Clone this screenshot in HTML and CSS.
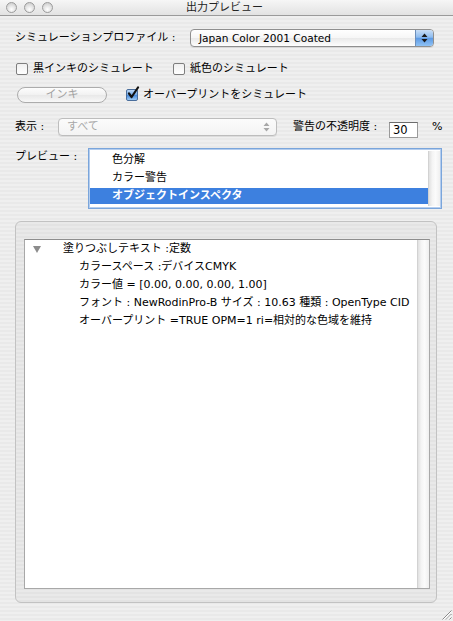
FILE: index.html
```html
<!DOCTYPE html>
<html lang="ja">
<head>
<meta charset="utf-8">
<title>出力プレビュー</title>
<link rel="stylesheet" href="styles.css">
</head>
<body>
<div class="window">
  <div class="titlebar">
    <div class="lights"><span class="light"></span><span class="light"></span><span class="light"></span></div>
    <div class="title">出力プレビュー</div>
    <div></div>
  </div>
  <div class="content">
    <div class="row r1">
      <span class="label l-profile">シミュレーションプロファイル :</span>
      <div class="popup profile">
        <span class="popup-text">Japan Color 2001 Coated</span>
        <span class="arrows blue">
          <svg width="7" height="10" viewBox="0 0 7 10"><path d="M3.5 0.5 L6.5 4 L0.5 4 Z M3.5 9.5 L6.5 6 L0.5 6 Z" fill="#1a1a1a"/></svg>
        </span>
      </div>
    </div>
    <div class="row r2">
      <span class="check c1"><span class="box"></span><span>黒インキのシミュレート</span></span>
      <span class="check c2"><span class="box"></span><span>紙色のシミュレート</span></span>
    </div>
    <div class="row r3">
      <span class="btn">インキ</span>
      <span class="check c3">
        <span class="box checked">
          <svg width="14" height="15" viewBox="0 0 14 15"><path d="M3 7.5 L5.6 11 L12 1.5" fill="none" stroke="#111" stroke-width="2.2" stroke-linecap="round" stroke-linejoin="round"/></svg>
        </span>
        <span>オーバープリントをシミュレート</span>
      </span>
    </div>
    <div class="row r4">
      <span class="label l-view">表示 :</span>
      <div class="popup disabled">
        <span class="popup-text">すべて</span>
        <span class="arrows gray">
          <svg width="7" height="10" viewBox="0 0 7 10"><path d="M3.5 0.5 L6.5 4 L0.5 4 Z M3.5 9.5 L6.5 6 L0.5 6 Z" fill="#a8a8a8"/></svg>
        </span>
      </div>
      <span class="label l-opacity">警告の不透明度 :</span>
      <span class="field">30</span>
      <span class="pct">%</span>
    </div>
    <div class="row r5">
      <span class="label l-preview">プレビュー :</span>
      <div class="listbox">
        <div class="list-items">
          <div class="item">色分解</div>
          <div class="item">カラー警告</div>
          <div class="item selected">オブジェクトインスペクタ</div>
        </div>
        <div class="scrolltrack"></div>
      </div>
    </div>
    <div class="group">
      <div class="tree">
        <div class="tree-items">
          <div class="node parent"><span class="disclosure"></span><span>塗りつぶしテキスト :定数</span></div>
          <div class="node child">カラースペース :デバイスCMYK</div>
          <div class="node child">カラー値 = [0.00, 0.00, 0.00, 1.00]</div>
          <div class="node child">フォント : NewRodinPro-B サイズ : 10.63 種類 : OpenType CID</div>
          <div class="node child">オーバープリント =TRUE OPM=1 ri=相対的な色域を維持</div>
        </div>
        <div class="scrolltrack"></div>
      </div>
    </div>
  </div>
  <svg class="grip" width="11" height="11" viewBox="0 0 11 11">
    <path d="M10.5 1.5 L1.5 10.5 M10.5 5 L5 10.5 M10.5 8.5 L8.5 10.5" stroke="#8a8a8a" stroke-width="1"/>
    <path d="M10.5 2.5 L2.5 10.5 M10.5 6 L6 10.5 M10.5 9.5 L9.5 10.5" stroke="#ffffff" stroke-width="1"/>
  </svg>
</div>
</body>
</html>
```

FILE: styles.css
```css
* { box-sizing: border-box; }
html, body { margin: 0; padding: 0; }
body {
  font-family: "DejaVu Sans", "Noto Sans CJK JP", sans-serif;
  font-size: 11px;
  color: #000;
}
.window {
  position: relative;
  width: 453px;
  height: 621px;
  overflow: hidden;
  background: repeating-linear-gradient(to bottom, #efefef 0, #efefef 2px, #e9e9e9 2px, #e9e9e9 4px);
}
.titlebar {
  height: 16px;
  display: grid;
  grid-template-columns: 1fr auto 1fr;
  align-items: center;
  background: linear-gradient(to bottom, #f6f6f6, #e2e2e2);
  border-bottom: 1px solid #9a9a9a;
}
.lights {
  display: flex;
  gap: 7px;
  padding-left: 6px;
}
.light {
  width: 11px;
  height: 11px;
  border-radius: 50%;
  border: 1px solid #9c9c9c;
  background: radial-gradient(circle at 50% 70%, #ffffff 0, #e6e6e6 45%, #c4c4c4 100%);
}
.title {
  font-size: 11px;
  line-height: 15px;
  color: #222;
  padding-right: 4px;
}
.content {
  padding-left: 15px;
}
.row {
  display: flex;
  align-items: center;
}
.label { line-height: 14px; white-space: nowrap; }
.r1 { margin-top: 13px; height: 18px; }
.l-profile { width: 175px; }
.popup {
  display: flex;
  align-items: center;
  height: 18px;
  border: 1px solid #8f8f8f;
  border-radius: 4px;
  background: linear-gradient(to bottom, #ffffff 0, #f6f6f6 50%, #e9e9e9 51%, #fdfdfd 100%);
  overflow: hidden;
  box-shadow: 0 1px 0 rgba(0,0,0,0.08);
}
.popup-text { flex: 1; padding-left: 8px; line-height: 14px; white-space: nowrap; }
.profile { width: 244px; }
.profile .popup-text { font-size: 10.6px; }
.arrows {
  width: 18px;
  align-self: stretch;
  display: flex;
  align-items: center;
  justify-content: center;
}
.arrows.blue {
  background: linear-gradient(to bottom, #c9def6 0, #8ebcef 45%, #5d9ae4 52%, #8fc2f4 100%);
  border-left: 1px solid #6d8fba;
}
.arrows.gray { width: 20px; }
.r2 { margin-top: 15px; height: 13px; }
.check {
  display: flex;
  align-items: center;
  gap: 5px;
  white-space: nowrap;
  line-height: 14px;
}
.c1 { margin-left: 1px; width: 157px; }
.box {
  width: 12px;
  height: 12px;
  border: 1px solid #7e7e7e;
  border-radius: 2px;
  background: linear-gradient(to bottom, #f0f0f0, #ffffff);
  position: relative;
  flex: none;
}
.box.checked {
  background: linear-gradient(to bottom, #bcd6f4 0, #79aee8 45%, #4c8ddc 55%, #9ccaf4 100%);
  border-color: #4a6e9c;
}
.box.checked svg {
  position: absolute;
  left: -1px;
  top: -4px;
}
.r3 { margin-top: 12px; height: 16px; }
.btn {
  width: 90px;
  height: 16px;
  margin-left: 2px;
  border: 1px solid #acacac;
  border-radius: 8px;
  background: linear-gradient(to bottom, #fdfdfd 0, #f1f1f1 50%, #e8e8e8 51%, #f8f8f8 100%);
  color: #a2a2a2;
  display: flex;
  align-items: center;
  justify-content: center;
  line-height: 14px;
}
.c3 { margin-left: 19px; gap: 5px; }
.r4 { margin-top: 15px; height: 18px; align-items: flex-start; }
.l-view { width: 43px; margin-top: 2px; }
.disabled {
  width: 219px;
  border-color: #bdbdbd;
  color: #a8a8a8;
  background: linear-gradient(to bottom, #fbfbfb, #f3f3f3);
}
.l-opacity { width: 96px; margin-left: 16px; margin-top: 2px; }
.field {
  width: 29px;
  height: 16px;
  margin-top: 4px;
  background: #fff;
  border: 1px solid #9a9a9a;
  border-top-color: #6c6c6c;
  line-height: 14px;
  padding-left: 3px;
  font-size: 11.5px;
}
.pct { margin-left: 14px; margin-top: 2px; line-height: 14px; }
.r5 { margin-top: 12px; align-items: flex-start; }
.l-preview { width: 73px; margin-top: 2px; }
.listbox {
  width: 354px;
  height: 61px;
  display: flex;
  background: #fff;
  border: 1px solid #7aa5db;
  box-shadow: inset 0 0 0 1px #b4cdee;
  padding: 2px 1px 2px 1px;
}
.list-items { flex: 1; }
.item {
  height: 18px;
  line-height: 18px;
  padding-left: 22px;
  white-space: nowrap;
}
.item.selected {
  background: #3d80df;
  color: #fff;
  font-weight: bold;
  height: 16px;
  line-height: 16px;
  margin-top: 1px;
}
.scrolltrack {
  width: 12px;
  flex: none;
  background: linear-gradient(to right, #e0e0e0 0, #f4f4f4 30%, #fbfbfb 60%, #efefef 100%);
  border-left: 1px solid #d2d2d2;
}
.group {
  margin-top: 12px;
  width: 422px;
  height: 382px;
  border: 1px solid #c2c2c2;
  border-radius: 6px;
  background: repeating-linear-gradient(to bottom, #e9e9e9 0, #e9e9e9 2px, #e3e3e3 2px, #e3e3e3 4px);
  padding: 17px 0 0 8px;
}
.tree {
  width: 406px;
  height: 350px;
  display: flex;
  background: #fff;
  border: 1px solid #a8a8a8;
  border-top-color: #8e8e8e;
}
.tree-items { flex: 1; }
.node {
  height: 18px;
  line-height: 18px;
  white-space: nowrap;
}
.parent {
  display: flex;
  align-items: center;
  padding-left: 8px;
}
.disclosure {
  width: 0;
  height: 0;
  border-left: 4px solid transparent;
  border-right: 4px solid transparent;
  border-top: 7px solid #8c8c8c;
  margin-right: 22px;
  margin-top: 1px;
}
.child { padding-left: 54px; }
.grip {
  position: absolute;
  right: 1px;
  bottom: 1px;
}
```
